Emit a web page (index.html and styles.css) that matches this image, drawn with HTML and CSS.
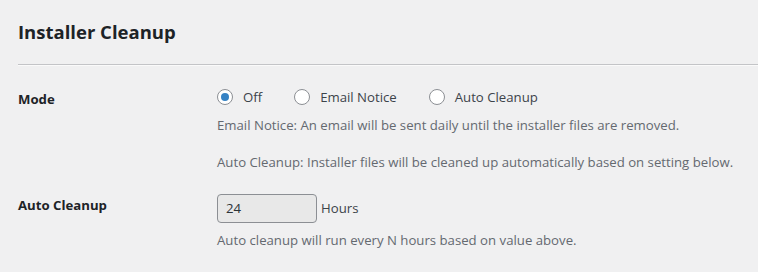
FILE: index.html
```html
<!DOCTYPE html>
<html lang="en">
<head>
    <meta charset="UTF-8">
    <title>Installer Cleanup</title>
    <link rel="stylesheet" href="styles.css">
</head>
<body>
    <!-- ====== Installer Cleanup Settings ====== -->
    <div class="wrap">
        <h2 class="section-title">Installer Cleanup</h2>
        <hr class="divider">

        <div class="form-table">
            <!-- Mode -->
            <div class="row">
                <div class="label">Mode</div>
                <div class="field">
                    <div class="radios">
                        <label class="radio"><input type="radio" name="mode" checked> Off</label>
                        <label class="radio"><input type="radio" name="mode"> Email Notice</label>
                        <label class="radio"><input type="radio" name="mode"> Auto Cleanup</label>
                    </div>
                    <p class="description">
                        Email Notice: An email will be sent daily until the installer files are removed.<br><br>
                        Auto Cleanup: Installer files will be cleaned up automatically based on setting below.
                    </p>
                </div>
            </div>

            <!-- Auto Cleanup hours -->
            <div class="row">
                <div class="label">Auto Cleanup</div>
                <div class="field">
                    <div class="hours">
                        <input class="hours-input" type="text" value="24" readonly>
                        <span>Hours</span>
                    </div>
                    <p class="description hours-note">Auto cleanup will run every N hours based on value above.</p>
                </div>
            </div>
        </div>
    </div>
</body>
</html>
```

FILE: styles.css
```css
/* ====== Base ====== */
body {
    margin: 0;
    background: #f0f0f1;
    color: #3c434a;
    font-family: 'Open Sans', 'Noto Sans', sans-serif;
    font-size: 13.2px;
    line-height: 1.4;
}
.wrap {
    padding: 0 0 0 18px;
}

/* ====== Heading ====== */
.section-title {
    margin: 0;
    padding: 20px 0 0 0;
    font-size: 18.5px;
    font-weight: 700;
    color: #1d2327;
    line-height: 24px;
}
.divider {
    margin: 20px 0 0 0;
    border: none;
    border-top: 1px solid #c3c4c7;
    border-bottom: 1px solid #fafafa;
}

/* ====== Form Table ====== */
.form-table {
    padding-top: 17px;
}
.row {
    display: grid;
    grid-template-columns: 199px 1fr;
    margin-bottom: 17px;
}
.label {
    font-weight: 700;
    color: #1d2327;
    padding-top: 7px;
}
.field {
    padding-top: 5px;
}

/* ====== Radios ====== */
.radios {
    display: flex;
    gap: 32px;
}
.radio {
    display: flex;
    align-items: center;
    gap: 10px;
    color: #3c434a;
}
.radio input {
    appearance: none;
    margin: 0;
    width: 16px;
    height: 16px;
    border: 1px solid #8c8f94;
    border-radius: 50%;
    background: #fff;
    box-sizing: border-box;
    display: flex;
    align-items: center;
    justify-content: center;
}
.radio input:checked::before {
    content: "";
    width: 8px;
    height: 8px;
    border-radius: 50%;
    background: #3582c4;
}

/* ====== Description ====== */
.description {
    margin: 10px 0 0 0;
    color: #646970;
    line-height: 18.5px;
}
.hours-note {
    margin-top: 8px;
}

/* ====== Hours ====== */
.hours {
    display: flex;
    align-items: center;
    gap: 4px;
}
.hours-input {
    width: 100px;
    height: 29px;
    box-sizing: border-box;
    border: 1px solid #8c8f94;
    border-radius: 4px;
    background: #e8e8e8;
    color: #2c3338;
    font-family: inherit;
    font-size: 13.2px;
    padding: 0 8px;
    outline: none;
}
```
